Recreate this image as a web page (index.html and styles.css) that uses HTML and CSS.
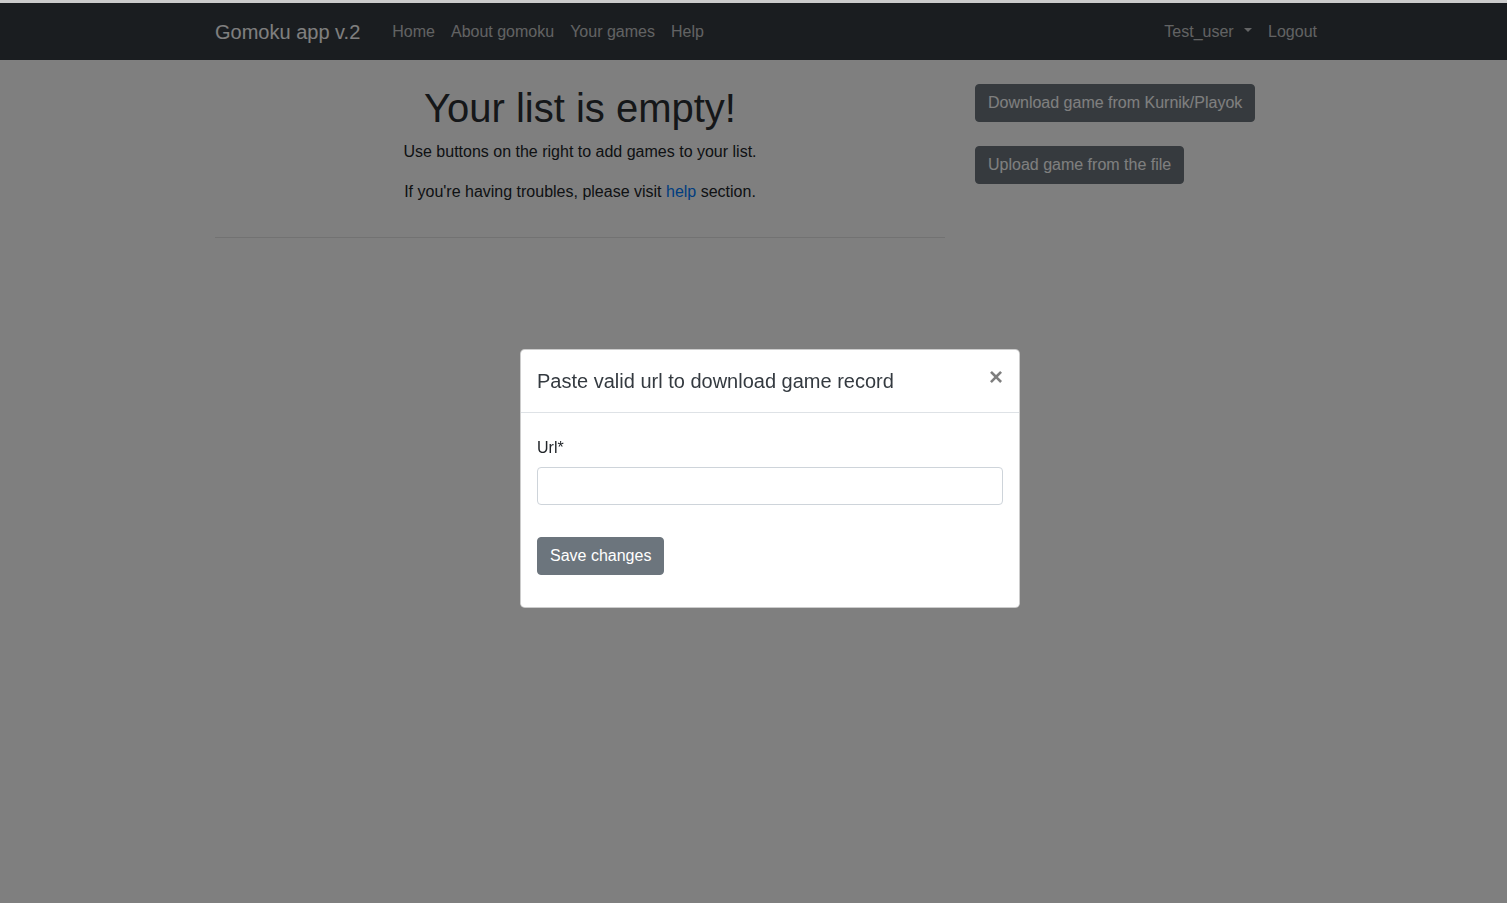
FILE: index.html
```html
<!DOCTYPE html>
<html lang="en">
<head>
<meta charset="utf-8">
<title>Gomoku app v.2</title>
<link rel="stylesheet" href="styles.css">
</head>
<body>
<nav class="navbar">
  <div class="container nav-inner">
    <a class="brand" href="#">Gomoku app v.2</a>
    <ul class="nav-list">
      <li><a class="nav-link" href="#">Home</a></li>
      <li><a class="nav-link" href="#">About gomoku</a></li>
      <li><a class="nav-link" href="#">Your games</a></li>
      <li><a class="nav-link" href="#">Help</a></li>
    </ul>
    <ul class="nav-list nav-right">
      <li><a class="nav-link dropdown-toggle" href="#">Test_user</a></li>
      <li><a class="nav-link" href="#">Logout</a></li>
    </ul>
  </div>
</nav>

<main class="container main-content">
  <div class="row">
    <section class="col-main">
      <div class="empty-block">
        <h1 class="empty-title">Your list is empty!</h1>
        <p>Use buttons on the right to add games to your list.</p>
        <p>If you're having troubles, please visit <a class="link" href="#">help</a> section.</p>
      </div>
      <hr class="divider">
    </section>
    <aside class="col-side">
      <button class="btn btn-secondary" type="button">Download game from Kurnik/Playok</button>
      <button class="btn btn-secondary" type="button">Upload game from the file</button>
    </aside>
  </div>
</main>

<div class="backdrop"></div>

<div class="modal">
  <div class="modal-dialog">
    <div class="modal-content">
      <div class="modal-header">
        <h5 class="modal-title">Paste valid url to download game record</h5>
        <button class="close" type="button" aria-label="Close">×</button>
      </div>
      <div class="modal-body">
        <form class="url-form">
          <label class="form-label" for="url">Url*</label>
          <input class="form-control" id="url" type="text">
          <button class="btn btn-secondary save-btn" type="button">Save changes</button>
        </form>
      </div>
    </div>
  </div>
</div>
</body>
</html>
```

FILE: styles.css
```css
* {
  box-sizing: border-box;
}

html, body {
  height: 100%;
}

body {
  margin: 0;
  border-top: 3px solid #cbcbcb;
  font-family: "Liberation Sans", Arial, sans-serif;
  font-size: 16px;
  line-height: 1.5;
  color: #212529;
  background: #fff;
  overflow: hidden;
}

a {
  text-decoration: none;
}

.container {
  width: 1140px;
  margin-left: calc(50% - 553.5px);
  padding: 0 15px;
}

/* Navbar */
.navbar {
  background: #343a40;
  height: 57px;
  display: flex;
  align-items: center;
}

.nav-inner {
  display: flex;
  align-items: center;
}

.brand {
  color: #fff;
  font-size: 20px;
  line-height: 30px;
  padding: 5px 0;
  margin-right: 24px;
}

.nav-list {
  list-style: none;
  margin: 0;
  padding: 0;
  display: flex;
}

.nav-right {
  margin-left: auto;
}

.nav-link {
  display: block;
  padding: 8px 8px;
  color: rgba(255, 255, 255, 0.72);
}

.dropdown-toggle::after {
  content: "";
  display: inline-block;
  margin-left: 0.65em;
  vertical-align: 0.255em;
  border-top: 0.3em solid;
  border-right: 0.3em solid transparent;
  border-left: 0.3em solid transparent;
}

/* Main */
.main-content {
  padding-top: 24px;
}

.row {
  display: flex;
  margin: 0 -15px;
}

.col-main {
  flex: 0 0 66.6667%;
  padding: 0 15px;
}

.col-side {
  flex: 0 0 33.3333%;
  padding: 0 15px;
  display: flex;
  flex-direction: column;
  align-items: flex-start;
  gap: 24px;
}

.empty-block {
  display: flow-root;
  text-align: center;
}

.empty-title {
  margin: 0 0 8px;
  font-size: 40px;
  font-weight: 400;
  line-height: 1.2;
  color: #2b2f33;
}

.empty-block p {
  margin: 0 0 16px;
}

.link {
  color: #007bff;
}

.divider {
  margin: 17px 0 0;
  border: 0;
  border-top: 1px solid rgba(0, 0, 0, 0.1);
}

/* Buttons */
.btn {
  display: inline-block;
  font-family: inherit;
  font-size: 16px;
  line-height: 24px;
  padding: 6px 12px;
  border: 1px solid transparent;
  border-radius: 4px;
  cursor: pointer;
}

.btn-secondary {
  color: #fff;
  background: #6c757d;
  border-color: #6c757d;
}

/* Backdrop & modal */
.backdrop {
  position: fixed;
  top: 3px;
  left: 0;
  right: 0;
  bottom: 0;
  background: rgba(0, 0, 0, 0.5);
}

.modal {
  position: fixed;
  top: 0;
  left: 0;
  right: 0;
  bottom: 0;
}

.modal-dialog {
  width: 500px;
  margin-top: 349px;
  margin-left: calc(50% - 233.5px);
}

.modal-content {
  background: #fff;
  border: 1px solid rgba(0, 0, 0, 0.2);
  border-radius: 4.8px;
}

.modal-header {
  display: flex;
  align-items: flex-start;
  padding: 16px;
  border-bottom: 1px solid #dee2e6;
}

.modal-title {
  margin: 0;
  font-size: 20px;
  font-weight: 400;
  line-height: 30px;
  color: #343a40;
}

.close {
  margin: -16px -16px -16px auto;
  padding: 15px 16px 17px;
  background: transparent;
  border: 0;
  font-family: inherit;
  font-size: 24px;
  font-weight: 700;
  line-height: 1;
  color: #000;
  opacity: 0.5;
  text-shadow: 0 1px 0 #fff;
  cursor: pointer;
}

.modal-body {
  padding: 23px 16px 32px;
}

.url-form {
  display: flex;
  flex-direction: column;
  align-items: flex-start;
}

.form-label {
  display: block;
  margin-bottom: 7px;
}

.form-control {
  width: 100%;
  height: 38px;
  padding: 6px 12px;
  font-family: inherit;
  font-size: 16px;
  color: #495057;
  background: #fff;
  border: 1px solid #ced4da;
  border-radius: 4px;
}

.save-btn {
  margin-top: 32px;
}
```
